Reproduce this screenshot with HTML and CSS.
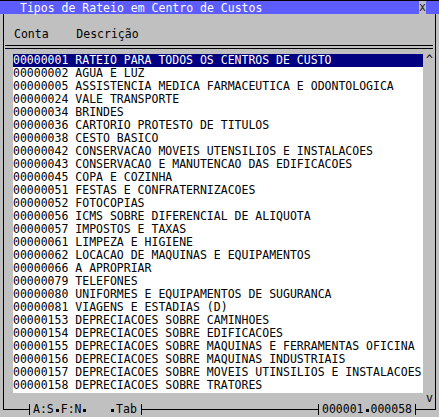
FILE: index.html
```html
<!DOCTYPE html>
<html lang="pt">
<head>
<meta charset="utf-8">
<title>Tipos de Rateio em Centro de Custos</title>
<link rel="stylesheet" href="styles.css">
</head>
<body>
<div class="window">
  <div class="titlebar">
    <span class="title">Tipos de Rateio em Centro de Custos</span>
    <span class="close">x</span>
  </div>
  <div class="frame">
    <div class="colhead">Conta    Descrição</div>
    <div class="rule"></div>
    <div class="content">
      <div class="list">
        <div class="row sel">00000001 RATEIO PARA TODOS OS CENTROS DE CUSTO</div>
        <div class="row">00000002 AGUA E LUZ</div>
        <div class="row">00000005 ASSISTENCIA MEDICA FARMACEUTICA E ODONTOLOGICA</div>
        <div class="row">00000024 VALE TRANSPORTE</div>
        <div class="row">00000034 BRINDES</div>
        <div class="row">00000036 CARTORIO PROTESTO DE TITULOS</div>
        <div class="row">00000038 CESTO BASICO</div>
        <div class="row">00000042 CONSERVACAO MOVEIS UTENSILIOS E INSTALACOES</div>
        <div class="row">00000043 CONSERVACAO E MANUTENCAO DAS EDIFICACOES</div>
        <div class="row">00000045 COPA E COZINHA</div>
        <div class="row">00000051 FESTAS E CONFRATERNIZACOES</div>
        <div class="row">00000052 FOTOCOPIAS</div>
        <div class="row">00000056 ICMS SOBRE DIFERENCIAL DE ALIQUOTA</div>
        <div class="row">00000057 IMPOSTOS E TAXAS</div>
        <div class="row">00000061 LIMPEZA E HIGIENE</div>
        <div class="row">00000062 LOCACAO DE MAQUINAS E EQUIPAMENTOS</div>
        <div class="row">00000066 A APROPRIAR</div>
        <div class="row">00000079 TELEFONES</div>
        <div class="row">00000080 UNIFORMES E EQUIPAMENTOS DE SUGURANCA</div>
        <div class="row">00000081 VIAGENS E ESTADIAS (D)</div>
        <div class="row">00000153 DEPRECIACOES SOBRE CAMINHOES</div>
        <div class="row">00000154 DEPRECIACOES SOBRE EDIFICACOES</div>
        <div class="row">00000155 DEPRECIACOES SOBRE MAQUINAS E FERRAMENTAS OFICINA</div>
        <div class="row">00000156 DEPRECIACOES SOBRE MAQUINAS INDUSTRIAIS</div>
        <div class="row">00000157 DEPRECIACOES SOBRE MOVEIS UTINSILIOS E INSTALACOES</div>
        <div class="row">00000158 DEPRECIACOES SOBRE TRATORES</div>
      </div>
      <div class="scroll">
        <span class="arrow">^</span>
        <span class="arrow">v</span>
      </div>
    </div>
  </div>
  <div class="status">
    <span class="label left">A:S<span class="dot"></span>F:N<span class="dot"></span>   <span class="dot"></span>Tab</span>
    <span class="label right">000001<span class="dot"></span>000058</span>
  </div>
</div>
</body>
</html>
```

FILE: styles.css
```css
html, body {
  margin: 0;
  padding: 0;
}
body {
  width: 439px;
  height: 417px;
  overflow: hidden;
  background: #c0c0c0;
  font-family: "DejaVu Sans Mono", "Liberation Mono", monospace;
  font-size: 11.5px;
  line-height: 13px;
  color: #000;
}
.window {
  width: 439px;
  height: 417px;
}
.titlebar {
  display: flex;
  height: 13px;
  border-top: 1px solid #000;
  background: #5c5cff;
  color: #fff;
}
.title {
  margin-left: 20px;
  padding-top: 1px;
  line-height: 13px;
  white-space: pre;
}
.close {
  margin-left: auto;
  margin-right: 13px;
  width: 7px;
  height: 13px;
  background: #c0c0c0;
  color: #202020;
  text-align: center;
  line-height: 12px;
}
.frame {
  margin: 0 3px;
  border-left: 1px solid #000;
  border-right: 1px solid #000;
  border-bottom: 1px solid #000;
  padding-top: 14px;
  padding-bottom: 4px;
}
.colhead {
  padding-left: 10px;
  white-space: pre;
  height: 13px;
}
.rule {
  margin: 4px 2px 0 1px;
  height: 2px;
  border-top: 1px solid #000;
  border-bottom: 1px solid #000;
}
.content {
  display: flex;
  margin-top: 5px;
  height: 351px;
}
.list {
  margin-left: 9px;
  width: 410px;
  height: 339px;
  background: #fff;
}
.row {
  height: 13px;
  white-space: pre;
  overflow: hidden;
}
.row.sel {
  background: #000080;
  color: #fff;
}
.scroll {
  flex: 1;
  display: flex;
  flex-direction: column;
  justify-content: space-between;
  padding-left: 3px;
}
.arrow {
  height: 13px;
}
.status {
  display: flex;
  margin-top: -6px;
  line-height: 11px;
}
.label {
  background: #c0c0c0;
  border-left: 1px solid #000;
  border-right: 1px solid #000;
  white-space: pre;
  height: 11px;
}
.label.left {
  margin-left: 29px;
  padding: 0 4px 0 3px;
}
.label.right {
  margin-left: auto;
  margin-right: 23px;
  padding: 0 3px 0 3px;
}
.dot {
  display: inline-block;
  width: 1ch;
  height: 11px;
  vertical-align: top;
  position: relative;
}
.dot::before {
  content: "";
  position: absolute;
  left: 2px;
  top: 5px;
  width: 3px;
  height: 3px;
  background: #000;
}
```
